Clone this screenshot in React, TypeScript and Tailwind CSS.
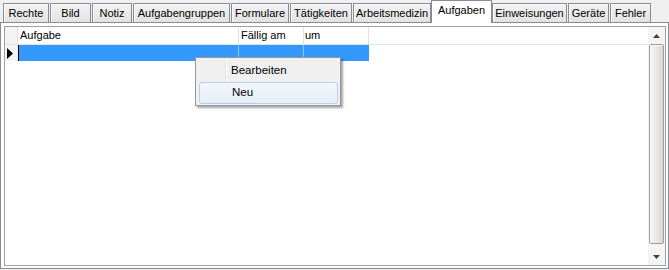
import React from 'react'

const tabs = [
  { label: 'Rechte', w: 'w-[46px]' },
  { label: 'Bild', w: 'w-[41px]' },
  { label: 'Notiz', w: 'w-[40px]' },
  { label: 'Aufgabengruppen', w: 'w-[97px]' },
  { label: 'Formulare', w: 'w-[58px]' },
  { label: 'Tätigkeiten', w: 'w-[62px]' },
  { label: 'Arbeitsmedizin', w: 'w-[78px]' },
  { label: 'Aufgaben', w: 'w-[61px]', active: true },
  { label: 'Einweisungen', w: 'w-[75px]' },
  { label: 'Geräte', w: 'w-[41px]' },
  { label: 'Fehler', w: 'w-[41px]' },
]

function Tab({ label, w, active }: { label: string; w: string; active?: boolean }) {
  if (active) {
    return (
      <div
        className={`${w} -mx-[1px] h-[23px] -mb-[1px] relative z-10 bg-white border border-b-0 border-[#898c95] flex items-start justify-center pt-[2px] leading-[14px]`}
      >
        {label}
      </div>
    )
  }
  return (
    <div
      className={`${w} h-[19px] border border-b-0 border-[#898c95] bg-gradient-to-b from-[#f2f2f2] to-[#e3e3e3] shadow-[inset_1px_1px_0_#fcfcfc] flex items-center justify-center leading-[14px]`}
    >
      {label}
    </div>
  )
}

function Arrow({ down }: { down?: boolean }) {
  return (
    <svg width="7" height="4" viewBox="0 0 7 4">
      {down ? <path d="M0 0h7L3.5 4z" fill="#404040" /> : <path d="M3.5 0L7 4H0z" fill="#404040" />}
    </svg>
  )
}

export default function App() {
  return (
    <div className="w-[669px] h-[270px] bg-[#f0f0f0] font-['Liberation_Sans',Arial,sans-serif] text-[11px] text-black relative overflow-hidden">
      {/* tab strip */}
      <div className="h-[22px] flex items-end pl-[3px] gap-[1px]">
        {tabs.map((t) => (
          <Tab key={t.label} {...t} />
        ))}
      </div>

      {/* tab page */}
      <div className="w-[669px] h-[247px] border border-[#898c95] bg-white pt-[3px] pl-[3px] pr-[2px] pb-[2px]">
        <div className="h-full border border-[#a0a0a0] flex">
          {/* grid */}
          <div className="flex-1">
            <div className="flex h-[18px] border-b border-[#e2e2e2]">
              <div className="w-[13px] border-r border-[#e2e2e2] bg-[#f4f4f4]" />
              <div className="w-[221px] border-r border-[#e2e2e2] pl-[2px] leading-[17px]">Aufgabe</div>
              <div className="w-[65px] border-r border-[#e2e2e2] pl-[2px] leading-[17px]">Fällig am</div>
              <div className="w-[65px] border-r border-[#e2e2e2] pl-[1px] leading-[17px]">um</div>
            </div>
            <div className="flex h-[16px]">
              <div className="w-[13px] bg-[#f4f4f4] flex items-center pl-[2px]">
                <svg width="6" height="11" viewBox="0 0 6 11">
                  <path d="M0 0L6 5.5L0 11z" fill="#000" />
                </svg>
              </div>
              <div className="w-[221px] bg-[#3399ff] border-l border-black border-r border-r-[#8fc4f7]" />
              <div className="w-[65px] bg-[#3399ff] border-r border-[#8fc4f7]" />
              <div className="w-[65px] bg-[#3399ff]" />
            </div>
          </div>

          {/* scrollbar */}
          <div className="w-[17px] bg-[#f4f4f4] flex flex-col">
            <div className="h-[17px] flex items-center justify-center">
              <Arrow />
            </div>
            <div className="h-[200px] mx-[1px] rounded-[2px] border border-[#9b9b9b] bg-gradient-to-r from-[#f5f5f5] via-[#e8e8e8] to-[#d6d6d6] shadow-[inset_1px_1px_0_#ffffff]" />
            <div className="flex-1" />
            <div className="h-[17px] flex items-center justify-center">
              <Arrow down />
            </div>
          </div>
        </div>
      </div>

      {/* context menu */}
      <div className="absolute left-[195px] top-[57px] w-[146px] h-[49px] bg-[#f0f0f0] border border-[#979797] shadow-[2px_2px_2px_rgba(0,0,0,0.35)] p-[2px] pt-[2px] text-[11.5px]">
        <div className="absolute left-[29px] top-[1px] bottom-[1px] w-[2px] border-l border-[#e2e3e3] border-r border-r-white" />
        <div className="relative h-[22px] flex items-center pl-[33px]">Bearbeiten</div>
        <div className="relative h-[22px] flex items-center pl-[32px] ml-[1px] rounded-[3px] border border-[#b4d0ee] bg-gradient-to-b from-[#f5f8fd] to-[#e5edf8]">
          Neu
        </div>
      </div>
    </div>
  )
}
